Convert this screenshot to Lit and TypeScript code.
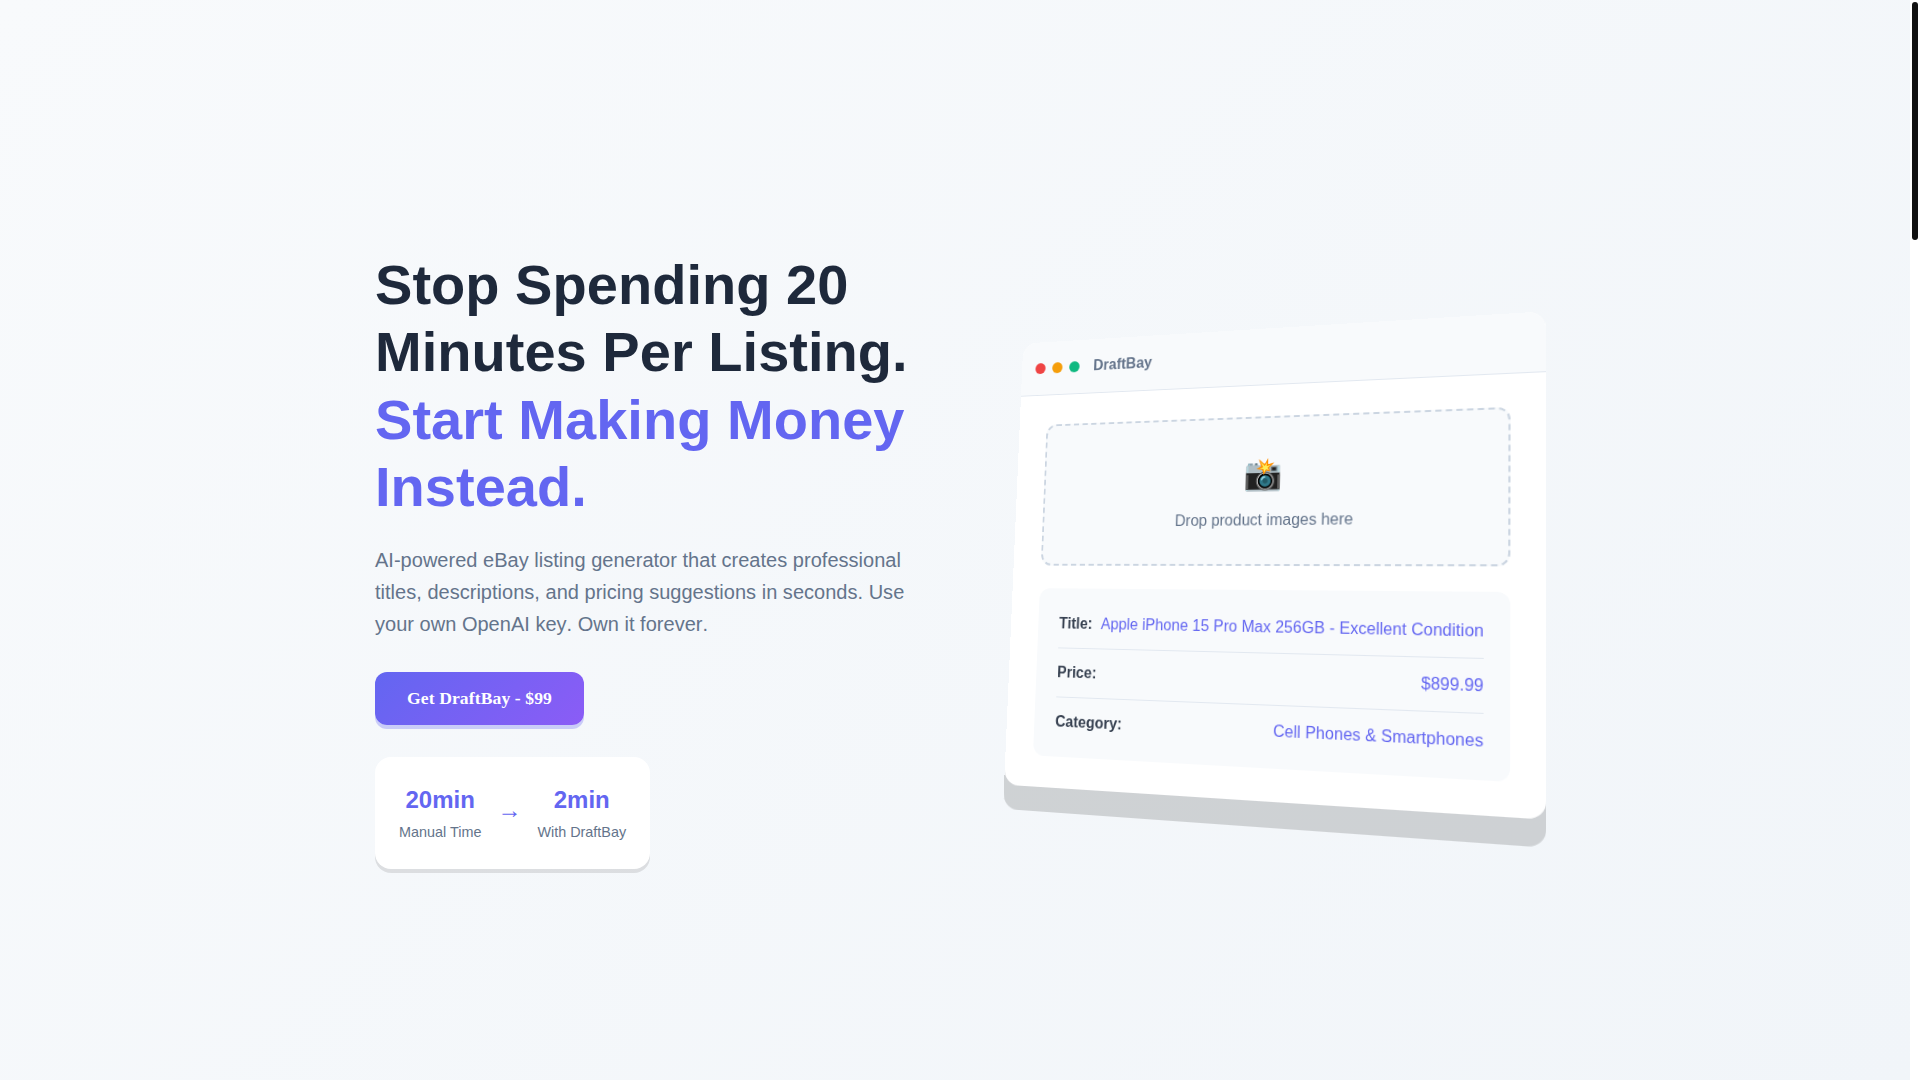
import { LitElement, html, css } from "lit";
import { customElement } from "lit/decorators.js";

@customElement("app-root")
export class AppRoot extends LitElement {
  static styles = css`
    :host { display: flex; height: 100vh; overflow: hidden; font-family: "Liberation Sans", Arial, sans-serif; color: #1e293b; line-height: 1.6; background: #fff; }
    * { box-sizing: border-box; }
    .page { flex: 1; min-width: 0; height: 1080px; overflow: hidden; }
    .rail { width: 10px; flex: none; padding: 2px; background: #fff; }
    .thumb { height: 238px; border-radius: 3px; background: #111; }
    .hero { min-height: 1080px; padding: 120px 0 80px; display: flex; align-items: center; background: linear-gradient(135deg, #f8fafc 0%, #f1f5f9 100%); }
    .container { width: 1200px; margin: 0 auto; padding: 0 20px; display: grid; grid-template-columns: 1fr 1fr; gap: 64px; align-items: center; }
    h1 { margin: 0 0 24px; font-size: 56px; line-height: 1.2; font-weight: 700; color: #1e293b; font-kerning: none; letter-spacing: 0.03px; }
    h1 span { color: #6366f1; }
    p { margin: 0 0 32px; font-size: 20px; line-height: 1.6; color: #64748b; font-kerning: none; letter-spacing: 0.02px; }
    .buy { display: inline-block; height: 53px; padding: 0 32px; border: 0; border-radius: 12px; background: linear-gradient(135deg, #6366f1, #8b5cf6); color: #fff; font-family: "Liberation Serif", serif; font-size: 17.6px; font-weight: 700; font-kerning: none; letter-spacing: 0.1px; box-shadow: 0 4px 0 rgba(99,102,241,.3); }
    .cta { margin-bottom: 32px; line-height: 0; }
    .stats { display: inline-flex; align-items: center; gap: 16px; padding: 24px; border-radius: 16px; background: #fff; box-shadow: 0 4px 0 rgba(0,0,0,.1); }
    .stat { text-align: center; }
    .num { display: block; font-size: 24px; font-weight: 700; color: #6366f1; }
    .lbl { font-size: 14.4px; color: #64748b; }
    .arrow { font-size: 24px; color: #6366f1; font-family: "Liberation Serif", serif; padding-bottom: 5px; }
    .mock { background: #fff; border-radius: 16px; overflow: hidden; transform: perspective(1000px) rotateY(-15deg) rotateX(5deg); box-shadow: 0 25px 0 rgba(0,0,0,.15); }
    .mhead { display: flex; align-items: center; gap: 8px; padding: 16px; background: #f8fafc; border-bottom: 1px solid #e2e8f0; }
    .dot { width: 12px; height: 12px; border-radius: 50%; }
    .dot.red { background: #ef4444; }
    .dot.amber { background: #f59e0b; }
    .dot.green { background: #10b981; }
    .mtitle { margin-left: 8px; font-size: 16px; font-weight: 600; color: #64748b; }
    .mbody { padding: 32px; display: flex; flex-direction: column; gap: 24px; }
    .drop { border: 2px dashed #cbd5e1; border-radius: 12px; background: #f8fafc; padding: 32px; text-align: center; }
    .cam { font-size: 32px; line-height: 1.6; margin-bottom: 8px; }
    .droptext { font-size: 16px; color: #64748b; }
    .result { background: #f8fafc; border-radius: 12px; padding: 24px; }
    .row { display: flex; justify-content: space-between; align-items: flex-start; gap: 8px; padding: 12px 0; border-bottom: 1px solid #e2e8f0; font-size: 16px; }
    .row:first-child { padding-top: 0; }
    .row:last-child { border-bottom: 0; padding-bottom: 0; }
    .k { font-weight: 600; color: #374151; white-space: nowrap; }
    .v { color: #6366f1; text-align: right; font-kerning: none; letter-spacing: 0.03px; }
  `;

  render() {
    return html`<div class="page">
      <section class="hero"><div class="container">
        <div>
          <h1>Stop Spending 20 Minutes Per Listing. <span>Start Making Money Instead.</span></h1>
          <p>AI-powered eBay listing generator that creates professional titles, descriptions, and pricing suggestions in seconds. Use your own OpenAI key. Own it forever.</p>
          <div class="cta"><button class="buy">Get DraftBay - $99</button></div>
          <div class="stats">
            <div class="stat"><span class="num">20min</span><span class="lbl">Manual Time</span></div>
            <div class="arrow">→</div>
            <div class="stat"><span class="num">2min</span><span class="lbl">With DraftBay</span></div>
          </div>
        </div>
        <div><div class="mock">
          <div class="mhead">
            <span class="dot red"></span>
            <span class="dot amber"></span>
            <span class="dot green"></span>
            <span class="mtitle">DraftBay</span>
          </div>
          <div class="mbody">
            <div class="drop"><div class="cam">📸</div><div class="droptext">Drop product images here</div></div>
            <div class="result">
              <div class="row"><span class="k">Title:</span><span class="v">Apple iPhone 15 Pro Max 256GB - Excellent Condition</span></div>
              <div class="row"><span class="k">Price:</span><span class="v">$899.99</span></div>
              <div class="row"><span class="k">Category:</span><span class="v">Cell Phones &amp; Smartphones</span></div>
            </div>
          </div>
        </div></div>
      </div></section>
    </div>
    <div class="rail"><div class="thumb"></div></div>`;
  }
}
